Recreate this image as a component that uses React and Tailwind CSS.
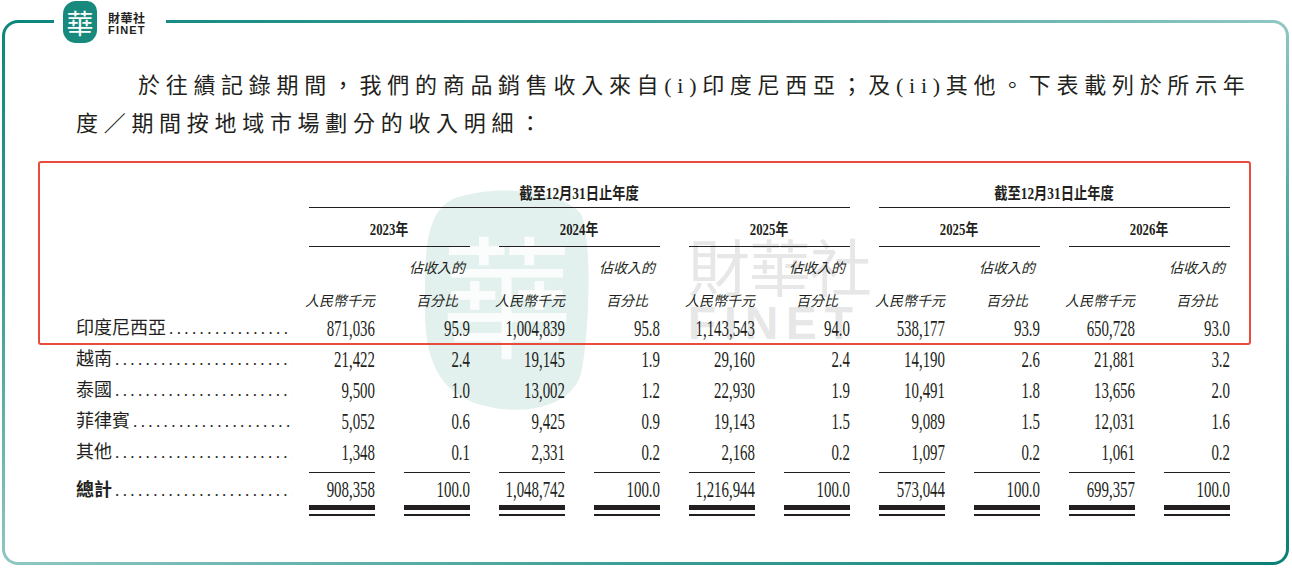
import React from 'react';

const cjk = { fontFamily: '"Liberation Serif", "Noto Sans CJK TC", serif' };

const filas = [
  ['印度尼西亞', ['871,036', '95.9', '1,004,839', '95.8', '1,143,543', '94.0', '538,177', '93.9', '650,728', '93.0']],
  ['越南', ['21,422', '2.4', '19,145', '1.9', '29,160', '2.4', '14,190', '2.6', '21,881', '3.2']],
  ['泰國', ['9,500', '1.0', '13,002', '1.2', '22,930', '1.9', '10,491', '1.8', '13,656', '2.0']],
  ['菲律賓', ['5,052', '0.6', '9,425', '0.9', '19,143', '1.5', '9,089', '1.5', '12,031', '1.6']],
  ['其他', ['1,348', '0.1', '2,331', '0.2', '2,168', '0.2', '1,097', '0.2', '1,061', '0.2']],
];

const totales = ['908,358', '100.0', '1,048,742', '100.0', '1,216,944', '100.0', '573,044', '100.0', '699,357', '100.0'];

const anios = ['2023年', '2024年', '2025年', '2025年', '2026年'];

const Etiqueta = ({ texto, bold }) => (
  <div className="w-[233px] pr-[17px] flex items-center overflow-hidden">
    <span className={`shrink-0 text-[18px] ${bold ? 'font-bold' : ''}`}>{texto}</span>
    <span className="flex-1 overflow-hidden whitespace-nowrap text-[17px] tracking-[3.4px] pl-[3px]">
      {'.'.repeat(60)}
    </span>
  </div>
);

// números condensados, alineados a la derecha aunque desborden
const Numero = ({ valor }) => (
  <div className="w-[66px] flex justify-end">
    <span className="shrink-0 inline-block origin-right scale-x-[0.62] whitespace-nowrap">{valor}</span>
  </div>
);

const Logo = () => (
  <div className="absolute left-[54px] top-0 w-[112px] h-[45px] bg-white flex items-start">
    <div className="ml-[9px] mt-[1px] w-[34px] h-[42px] rounded-[13px] rounded-tr-[10px] bg-[#178a7d] flex items-center justify-center">
      <span className="text-white text-[27px] leading-none" style={{ fontFamily: '"Noto Sans CJK TC", serif' }}>華</span>
    </div>
    <div className="ml-[11px] mt-[12px] flex flex-col leading-none">
      <span className="text-[12px] font-bold text-[#222] tracking-[0.5px]" style={{ fontFamily: '"Noto Sans CJK TC", sans-serif' }}>財華社</span>
      <span className="mt-[1px] text-[11px] font-bold text-[#222] tracking-[1.2px]" style={{ fontFamily: '"Liberation Sans", sans-serif' }}>FINET</span>
    </div>
  </div>
);

const MarcaAgua = () => (
  <>
    <svg className="absolute left-[419px] top-[188px]" width="172" height="226" viewBox="0 0 172 226">
      <path
        d="M36 10 C80 -4 142 2 162 26 C174 54 170 150 162 186 C152 218 108 228 66 218 C26 208 6 180 6 124 C6 70 4 24 36 10 Z"
        fill="#e2f0ee"
      />
      <text x="88" y="160" textAnchor="middle" fontSize="132" fill="#ffffff" fillOpacity="0.85" style={{ fontFamily: '"Noto Sans CJK TC", serif' }}>
        華
      </text>
    </svg>
    <div className="absolute left-[688px] top-[234px] flex flex-col leading-none text-[#e7e7e7]">
      <span className="text-[62px] tracking-[-1px]" style={{ fontFamily: '"Noto Sans CJK TC", sans-serif' }}>財華社</span>
      <span className="mt-[4px] text-[46px] font-bold tracking-[8px]" style={{ fontFamily: '"Liberation Sans", sans-serif' }}>FINET</span>
    </div>
  </>
);

export default function App() {
  return (
    <div className="relative w-[1292px] h-[585px] bg-white overflow-hidden text-[#231f20]" style={cjk}>
      {/* Marco */}
      <div className="ml-[2px] mt-[20px] w-[1287px] h-[545px] rounded-[16px] p-[3px] bg-[linear-gradient(to_bottom_right,#0b857b_0%,#3c9f97_25%,#8fc7c3_50%,#3a9d95_75%,#0a7f76_100%)]">
        <div className="relative w-full h-full rounded-[13px] bg-white pt-[44px] pl-[71px]">
          {/* Párrafo */}
          <div className="text-[22px] leading-[38px] tracking-[5.7px] whitespace-nowrap">
            <div className="pl-[62px]">於往績記錄期間，我們的商品銷售收入來自(i)印度尼西亞；及(ii)其他。下表載列於所示年</div>
            <div>度／期間按地域市場劃分的收入明細：</div>
          </div>

          {/* Tabla */}
          <div className="relative z-10 mt-[37px]">
            {/* Encabezado grupos */}
            <div className="flex">
              <div className="w-[233px]" />
              <div className="flex gap-[29px]">
                <div className="w-[541px] h-[28px] border-b-[1.5px] border-[#231f20] text-center leading-[28px]">
                  <span className="inline-block scale-x-[0.83] font-bold text-[16px]">截至12月31日止年度</span>
                </div>
                <div className="w-[351px] h-[28px] border-b-[1.5px] border-[#231f20] text-center leading-[28px]">
                  <span className="inline-block scale-x-[0.83] font-bold text-[16px]">截至12月31日止年度</span>
                </div>
              </div>
            </div>

            {/* Años */}
            <div className="flex">
              <div className="w-[233px]" />
              <div className="flex gap-[29px]">
                {anios.map((a, i) => (
                  <div key={i} className="w-[161px] h-[39px] pt-[12px] border-b-[1.5px] border-[#231f20] text-center leading-[20px]">
                    <span className="inline-block scale-x-[0.8] font-bold text-[16px]">{a}</span>
                  </div>
                ))}
              </div>
            </div>

            {/* Sub encabezados */}
            <div className="flex italic text-[14px] leading-[20px]">
              <div className="w-[233px]" />
              <div className="flex gap-[29px]">
                {Array.from({ length: 10 }, (_, i) => (
                  <div key={i} className={`w-[66px] ${i % 2 === 1 ? 'text-center' : 'flex flex-col items-end'}`}>
                    <div className="h-[38px] pt-[12px]">{i % 2 === 1 ? '佔收入的' : ''}</div>
                    <div className="h-[28px] pt-[7px] whitespace-nowrap">{i % 2 === 1 ? '百分比' : '人民幣千元'}</div>
                  </div>
                ))}
              </div>
            </div>

            {/* Filas */}
            {filas.map(([nombre, valores]) => (
              <div key={nombre} className="flex h-[31px] leading-[31px]">
                <Etiqueta texto={nombre} />
                <div className="flex gap-[29px] text-[24px]">
                  {valores.map((v, i) => (
                    <Numero key={i} valor={v} />
                  ))}
                </div>
              </div>
            ))}

            {/* Total */}
            <div className="flex mt-[3.5px]">
              <div className="pt-[3px] leading-[31px]">
                <Etiqueta texto="總計" bold />
              </div>
              <div className="flex gap-[29px] text-[24px]">
                {totales.map((v, i) => (
                  <div key={i} className="w-[66px] flex flex-col">
                    <div className="h-[1.5px] bg-[#231f20]" />
                    <div className="pt-[1px] leading-[31px]">
                      <Numero valor={v} />
                    </div>
                    <div className="h-[5px] bg-[#231f20]" />
                    <div className="h-[4px]" />
                    <div className="h-[1.5px] bg-[#231f20]" />
                  </div>
                ))}
              </div>
            </div>
          </div>
        </div>
      </div>

      <MarcaAgua />
      <Logo />

      {/* Recuadro rojo */}
      <div className="absolute left-[38px] top-[161px] w-[1213px] h-[184px] border-2 border-[#e94b3c] rounded-[3px] z-20" />
    </div>
  );
}
